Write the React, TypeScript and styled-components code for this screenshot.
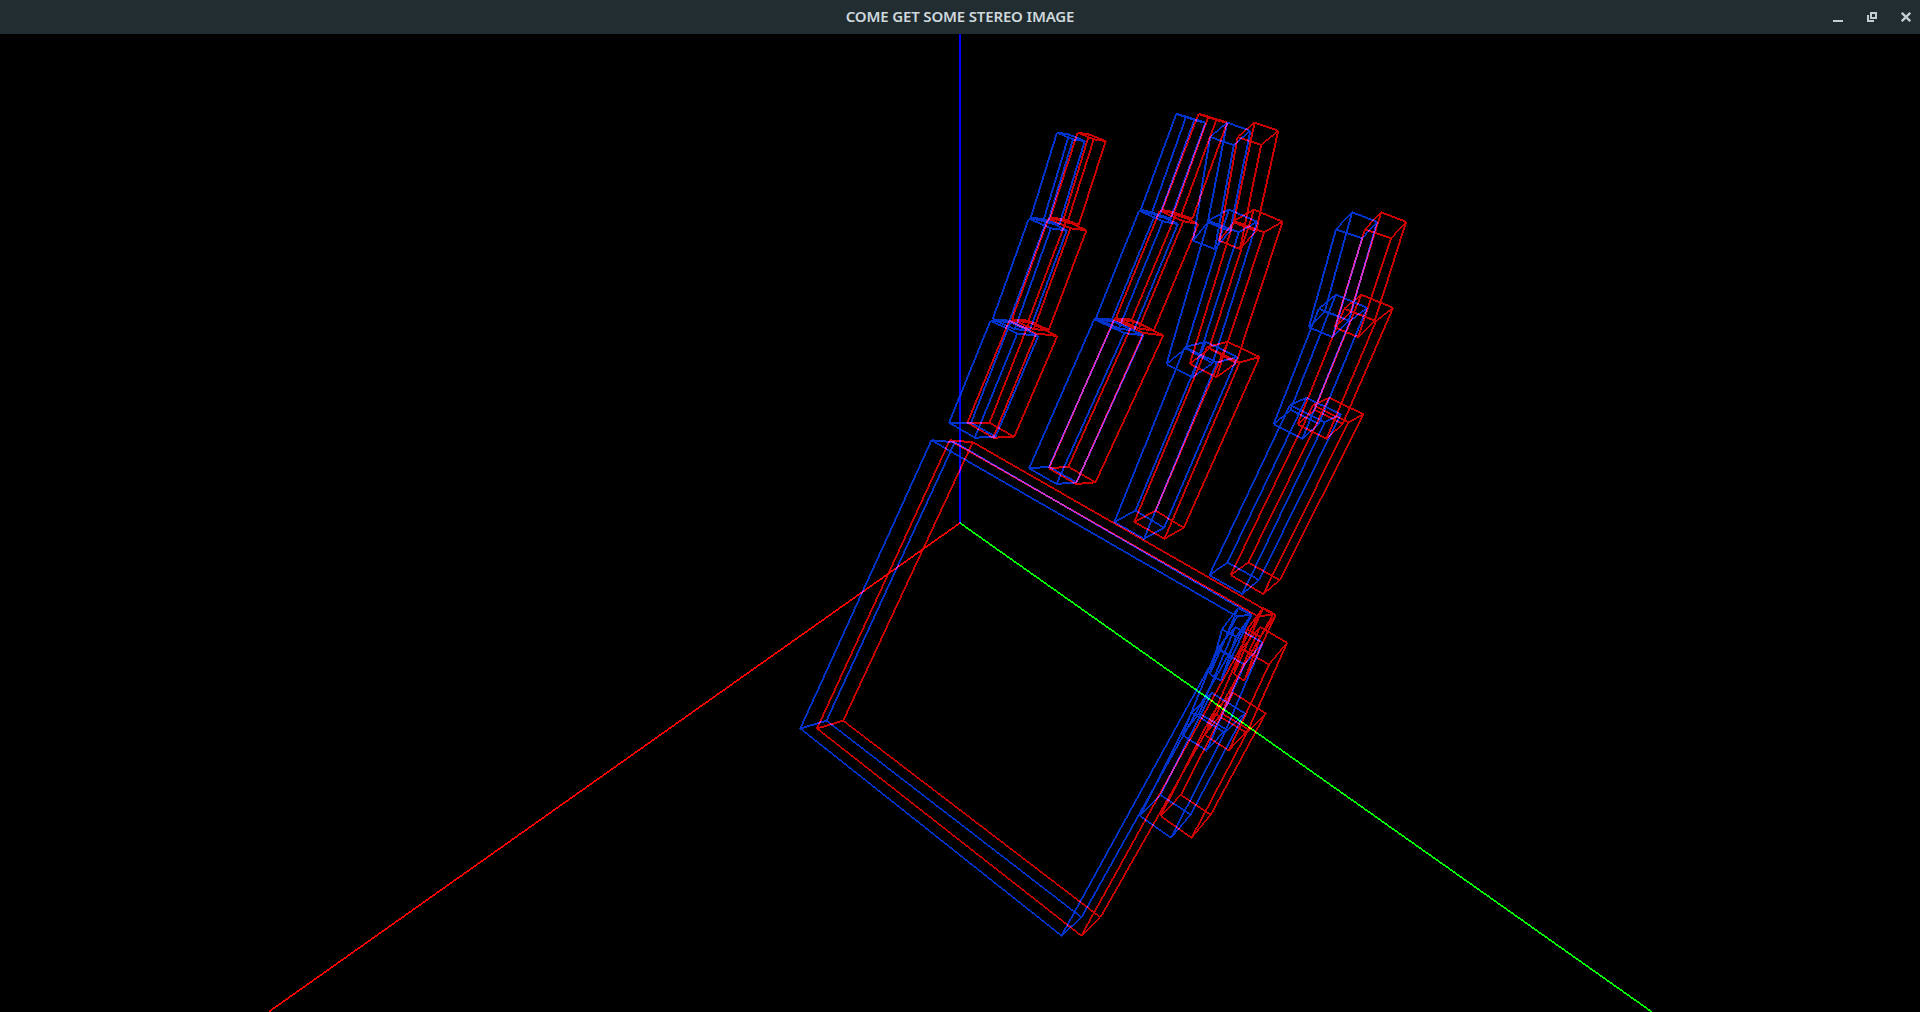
import React from "react";
import styled, { createGlobalStyle } from "styled-components";

const GlobalStyle = createGlobalStyle`
  html, body { margin: 0; padding: 0; background: #000; overflow: hidden; }
`;

const Window = styled.div`
  display: flex;
  flex-direction: column;
  width: 100vw;
  height: 100vh;
  background: #000;
`;

const TitleBar = styled.header`
  display: grid;
  grid-template-columns: 1fr auto 1fr;
  align-items: center;
  flex: 0 0 34px;
  background: #222d32;
  color: #cfd8dc;
`;

const Title = styled.h1`
  grid-column: 2;
  margin: 0;
  padding-bottom: 2px;
  font: 600 15px/32px "Noto Sans", "Open Sans", sans-serif;
  letter-spacing: -0.16px;
  white-space: nowrap;
`;

const Controls = styled.div`
  grid-column: 3;
  display: flex;
  justify-content: flex-end;
  gap: 24px;
  padding-right: 9px;
`;

const ControlButton = styled.button`
  display: block;
  width: 10px;
  height: 10px;
  margin: 0;
  padding: 0;
  border: 0;
  background: none;
  color: #c3ced3;
`;

const Glyph = styled.svg`
  display: block;
  width: 10px;
  height: 10px;
`;

const Viewport = styled.main`
  flex: 1;
  min-height: 0;
`;

const Scene = styled.svg`
  display: block;
  width: 100%;
  height: 100%;
  isolation: isolate;
  shape-rendering: crispEdges;
`;

const Layer = styled.g<{ $color: string }>`
  fill: ${(p) => p.$color};
  mix-blend-mode: plus-lighter;
`;

/* x and y in the left eye, followed by the disparity of the right eye */
type Vertex = [number, number, number];
type Point = [number, number];

/* Each solid is its near cap followed by its far cap, both walked in the same order. */
const solids: Vertex[][] = [
  // palm
  [
    [931.7, 440.3, 18.3], [955, 442.2, 18], [1251.3, 614.4, 22], [1237.3, 616.5, 21],
    [800.5, 728.5, 16.7], [826.7, 720.7, 16.7], [1081.7, 917.3, 18.9], [1061.7, 935.7, 19.8],
  ],
  // little finger
  [
    [1057.2, 132.6, 20.6], [1069.3, 134.5, 20], [1084.9, 141, 21], [1073.2, 139.3, 20.8],
    [1031, 217.5, 19.6], [1044, 219.3, 19.7], [1059.6, 224.7, 19.4], [1048, 222.5, 19.6],
  ],
  [
    [1029, 218.7, 19.6], [1046.7, 220.7, 19.6], [1067, 230.3, 19.6], [1051, 228.3, 19.6],
    [992.8, 319.3, 19.3], [1009.7, 320.7, 19], [1030, 330, 19], [1015, 329.3, 19],
  ],
  [
    [990.7, 320.7, 18.8], [1010.7, 322, 18.7], [1038.5, 336, 19], [1017.5, 333.5, 18.8],
    [949.3, 422.7, 18.3], [971.3, 422.7, 18.5], [995.7, 436.8, 18.6], [975, 437.7, 18.4],
  ],
  // ring finger
  [
    [1176.5, 113.9, 22.2], [1186.4, 116.5, 22.2], [1205.6, 122.7, 21.8], [1194.5, 120, 22],
    [1141, 209.8, 21.4], [1152.2, 212.5, 22], [1170.7, 218.7, 21.9], [1159.4, 216.5, 21.6],
  ],
  [
    [1139.3, 210.7, 20.7], [1155.7, 213.7, 20.7], [1178, 224, 20.6], [1163, 221.3, 20.6],
    [1096, 318.3, 20], [1112, 319.7, 20], [1134, 330.5, 20], [1119, 328.5, 20],
  ],
  [
    [1094.5, 319.3, 20], [1114, 321.3, 19.8], [1143.5, 335.3, 20], [1124.5, 333, 19.2],
    [1029.3, 468.3, 19.8], [1049.3, 466.8, 19.3], [1076.7, 482.3, 19], [1056.7, 484, 19.3],
  ],
  // middle finger
  [
    [1227.3, 122.5, 27.5], [1250.5, 130.8, 27.9], [1234, 145, 27.3], [1210.3, 137, 27.5],
    [1208, 222.3, 26], [1230.3, 231, 26], [1215, 249, 25.2], [1193.3, 240.7, 26],
  ],
  [
    [1229, 209.5, 25.3], [1257.3, 221.7, 25.5], [1239, 232.3, 25.3], [1208.5, 220.8, 25.5],
    [1186, 348.3, 23.5], [1212.7, 363.3, 23.5], [1192.7, 377.3, 23.8], [1166.7, 364, 23.3],
  ],
  [
    [1206, 341.8, 21.9], [1237.5, 357, 22.3], [1217, 362.5, 22.8], [1185, 347, 22.3],
    [1135.7, 510.7, 20], [1164.3, 527.7, 19.7], [1144.2, 538.8, 20.5], [1114.5, 522, 20],
  ],
  // index finger
  [
    [1352.3, 212.3, 29], [1377.3, 221.8, 29], [1362.3, 238.3, 29], [1336.2, 229.3, 29],
    [1325, 311.3, 26], [1349, 320.7, 26], [1332.7, 337, 25.5], [1309, 327.3, 26],
  ],
  [
    [1336, 294.7, 25.5], [1367.3, 307.8, 26], [1350.2, 321, 26], [1319, 308.7, 25.3],
    [1290.7, 410, 24], [1319, 423.7, 24], [1302.7, 438.8, 24], [1273.8, 424.3, 23.9],
  ],
  [
    [1306.7, 397.8, 22.7], [1341, 414.3, 22.8], [1325, 422.3, 23.5], [1290.2, 405, 23],
    [1227.7, 562.5, 20.7], [1259.3, 580, 20.7], [1242.5, 594, 21], [1209.5, 575.2, 21.3],
  ],
  // thumb
  [
    [1238.3, 608, 25], [1251.5, 614.8, 24.5], [1236.3, 636.7, 24.4], [1222.3, 629.3, 25],
    [1220.7, 649.8, 24], [1232.3, 656.5, 24], [1221.2, 680.7, 23.4], [1210, 674, 24],
  ],
  [
    [1235.5, 627, 24.7], [1263, 642.7, 24.4], [1244.7, 664.5, 24.5], [1217.3, 649, 24.5],
    [1199.3, 713.3, 22.5], [1226.3, 729.3, 22.3], [1206.7, 750.5, 22.3], [1182.5, 735, 22.5],
  ],
  [
    [1211.7, 692.8, 21.5], [1245, 713.3, 20.9], [1225, 732.7, 22], [1192, 712.5, 21.3],
    [1160.7, 795, 20.3], [1190.8, 814.7, 20.2], [1171.2, 837.8, 20.6], [1140.2, 816, 20.7],
  ],
];

const edges: [number, number][] = [
  [0, 1], [1, 2], [2, 3], [3, 0],
  [4, 5], [5, 6], [6, 7], [7, 4],
  [0, 4], [1, 5], [2, 6], [3, 7],
];

/* A two pixel wide segment, thickened along its minor axis like a rasterised GL line. */
function segment([x1, y1]: Point, [x2, y2]: Point): string {
  const steep = Math.abs(y2 - y1) > Math.abs(x2 - x1);
  const dx = steep ? 1 : 0;
  const dy = steep ? 0 : 1;
  return `M${x1 - dx} ${y1 - dy}L${x1 + dx} ${y1 + dy}L${x2 + dx} ${y2 + dy}L${x2 - dx} ${y2 - dy}Z`;
}

const EYE_OFFSET = -0.2;

function wireframe(eye: 0 | 1): string[] {
  return solids.flatMap((solid) =>
    edges.map(([a, b]) => {
      const at = ([x, y, shift]: Vertex): Point => [x + EYE_OFFSET + eye * shift, y];
      return segment(at(solid[a]), at(solid[b]));
    })
  );
}

const ORIGIN: Point = [960, 523];

const layers: { color: string; paths: string[] }[] = [
  { color: "#0000ff", paths: [segment(ORIGIN, [960, 34])] },
  { color: "#ff0000", paths: [segment(ORIGIN, [268.5, 1012])] },
  { color: "#00ff00", paths: [segment(ORIGIN, [1652, 1012])] },
  { color: "#0033cc", paths: wireframe(0) },
  { color: "#cc0000", paths: wireframe(1) },
];

export default function App() {
  return (
    <Window>
      <GlobalStyle />
      <TitleBar>
        <Title>COME GET SOME STEREO IMAGE</Title>
        <Controls>
          <ControlButton aria-label="Minimize">
            <Glyph viewBox="0 0 10 10">
              <path d="M0 8H10V10H0Z" fill="currentColor" />
            </Glyph>
          </ControlButton>
          <ControlButton aria-label="Restore">
            <Glyph viewBox="0 0 10 10">
              <path
                d="M3 0H10V7H3ZM5 2V5H8V2ZM0 3H2V8H7V10H0Z"
                fill="currentColor"
                fillRule="evenodd"
              />
            </Glyph>
          </ControlButton>
          <ControlButton aria-label="Close">
            <Glyph viewBox="0 0 10 10">
              <path d="M0.8 0.8L9.2 9.2M9.2 0.8L0.8 9.2" stroke="currentColor" strokeWidth="2.3" />
            </Glyph>
          </ControlButton>
        </Controls>
      </TitleBar>
      <Viewport>
        <Scene viewBox="0 34 1920 978">
          <rect x="0" y="34" width="1920" height="978" fill="#000" />
          {layers.map(({ color, paths }) => (
            <Layer key={color} $color={color}>
              {paths.map((d, i) => (
                <path key={i} d={d} />
              ))}
            </Layer>
          ))}
        </Scene>
      </Viewport>
    </Window>
  );
}
